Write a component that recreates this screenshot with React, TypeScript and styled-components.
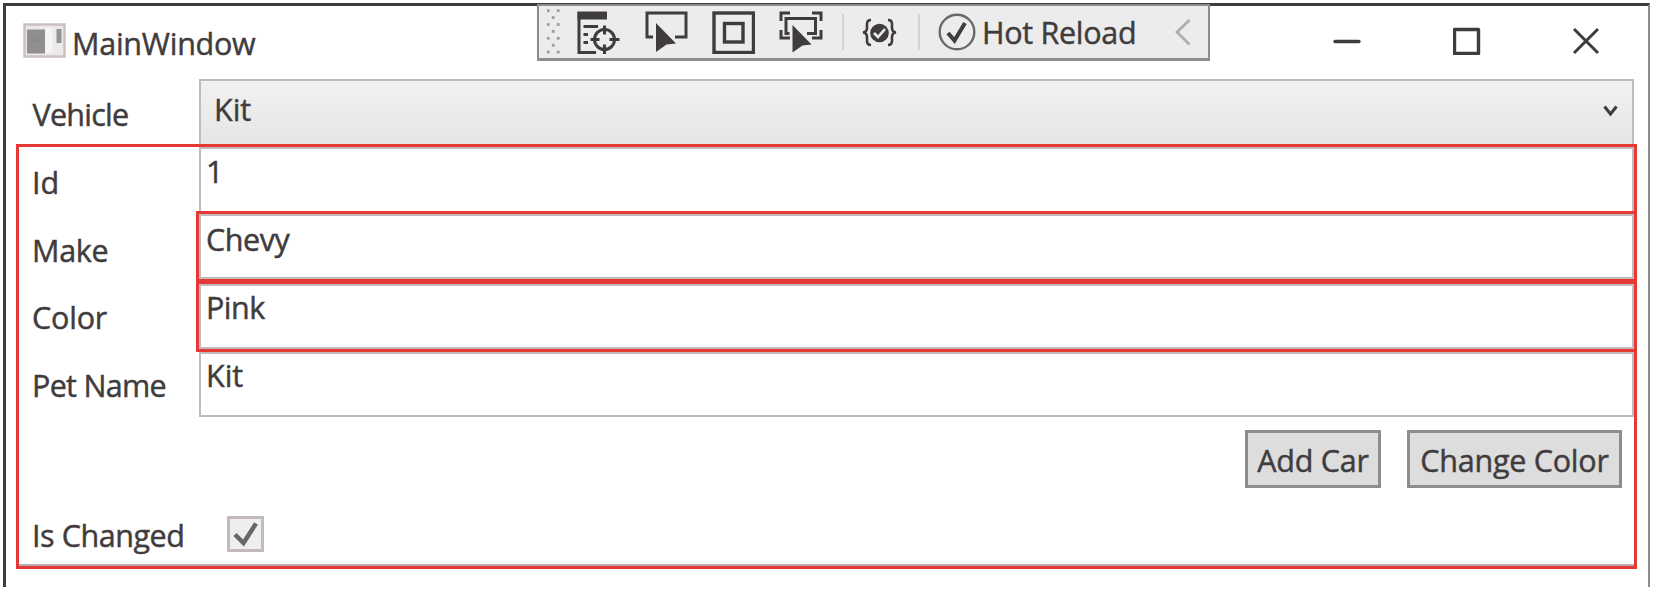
import React from "react";
import styled, { createGlobalStyle } from "styled-components";

const INK = "#403c3d";
const RED = "#e53935";
const LINE = "#c4b9bb";
const STEEL = "#908b8d";

const GlobalStyle = createGlobalStyle`
  *, *::before, *::after { box-sizing: border-box; }
  body {
    margin: 0;
    background: #fff;
    color: ${INK};
    font-family: "Open Sans", "Noto Sans", sans-serif;
    font-size: 30.5px;
    line-height: 40px;
    overflow: hidden;
  }
`;

const Screen = styled.div`
  height: 591px;
  padding: 3px 3px 4px 3px;
`;

const Window = styled.main`
  position: relative;
  height: 584px;
  border: solid ${INK};
  border-width: 3px 2px 0 3px;
  border-right-color: ${STEEL};
`;

const Text = styled.span<{ $track?: number }>`
  display: block;
  white-space: nowrap;
  letter-spacing: ${(p) => p.$track ?? 0}px;
  -webkit-text-stroke: 0.45px ${INK};
`;

const TitleBar = styled.header`
  display: flex;
  align-items: flex-start;
  height: 73px;
  padding: 16px 0 0 16px;
`;

const Title = styled.h1`
  margin: 1px auto 0 6px;
  font: inherit;
`;

const Caption = styled.div`
  display: flex;
  gap: 91.5px;
  padding: 5px 48px 0 0;
`;

const Icon = styled.svg<{ $ml?: number; $mt?: number }>`
  display: block;
  flex: none;
  margin-left: ${(p) => p.$ml ?? 0}px;
  margin-top: ${(p) => p.$mt ?? 0}px;
`;

const DebugBar = styled.div`
  position: absolute;
  left: 531px;
  top: -2px;
  width: 673px;
  height: 57px;
  display: flex;
  align-items: center;
  padding: 0 0 0 8px;
  border: 2px solid ${STEEL};
  border-bottom-width: 3px;
  background: #ececec;
`;

const Separator = styled.i<{ $ml: number }>`
  width: 2px;
  height: 36px;
  margin-left: ${(p) => p.$ml}px;
  background: #d4d2d3;
`;

const HotReload = styled.div`
  margin: 0 0 0 6px;
  width: 157px;
`;

const VehicleRow = styled.div`
  display: flex;
  height: 65px;
  padding: 0 14px 0 26.5px;
`;

const VehicleLabel = styled.label`
  width: 166.5px;
  padding-top: 15px;
`;

const Combo = styled.div`
  display: flex;
  flex: 1;
  justify-content: space-between;
  padding: 8px 14px 0 13px;
  border: 2px solid ${LINE};
  border-bottom: 0;
  background: linear-gradient(#f1f1f1, #ececec 45%, #e6e6e6);
`;

const Group = styled.section`
  width: 1621px;
  height: 425px;
  margin-left: 10px;
  border: 3px solid ${RED};
  box-shadow: inset 0 -2px 0 #b5adaf;
`;

const Row = styled.div<{ $h: number; $gap: number }>`
  display: flex;
  height: ${(p) => p.$h}px;
  margin-bottom: ${(p) => p.$gap}px;
`;

const Label = styled.label<{ $top: number }>`
  width: 180px;
  padding: ${(p) => p.$top}px 0 0 13px;
`;

const TextBox = styled.div<{ $invalid?: boolean; $top: number; $open?: boolean }>`
  flex: 1;
  padding: ${(p) => p.$top}px 0 0 5px;
  border: 2px solid ${LINE};
  border-bottom-width: ${(p) => (p.$open ? 0 : 2)}px;
  box-shadow: ${(p) => (p.$invalid ? `0 0 0 3px ${RED}` : "none")};
`;

const Actions = styled.div`
  display: flex;
  justify-content: flex-end;
  gap: 26px;
  padding: 13px 12px 0 0;
`;

const Button = styled.button<{ $w: number }>`
  display: flex;
  justify-content: center;
  width: ${(p) => p.$w}px;
  height: 58px;
  padding: 7px 0 0;
  border: 3px solid ${STEEL};
  background: #dddddd;
  color: inherit;
  font: inherit;
`;

const ChangedRow = styled.div`
  display: flex;
  padding-top: 26px;
`;

const ChangedLabel = styled.label`
  width: 208px;
  padding: 1px 0 0 13px;
`;

const CheckBox = styled.div`
  width: 37px;
  height: 36px;
  margin-top: 2px;
  border: 3px solid ${LINE};
  background: #efeeee;
`;

const fields = [
  { label: "Id", value: "1", h: 64, gap: 3, labelTop: 15, top: 2, invalid: false, labelTrack: 0, track: 0 },
  { label: "Make", value: "Chevy", h: 65, gap: 5, labelTop: 15.5, top: 3, invalid: true, labelTrack: -0.3, track: -0.45 },
  { label: "Color", value: "Pink", h: 65, gap: 3, labelTop: 13, top: 1, invalid: true, labelTrack: -0.2, track: -0.5 },
  { label: "Pet Name", value: "Kit", h: 65, gap: 0, labelTop: 13, top: 1, invalid: false, labelTrack: -0.7, track: 0 },
];

const gripDots = Array.from({ length: 7 }, (_, r) =>
  (r % 2 ? [6] : [1, 11]).map((x) => ({ x, y: 1.5 + r * 6.9 }))
).flat();

const POINTER = "M0 0 L20 20.5 L10.5 21.5 L0 29 Z";

export default function App() {
  return (
    <>
      <GlobalStyle />
      <Screen>
        <Window>
          <TitleBar>
            <Icon $ml={1} width="43" height="36" viewBox="0 0 43 36">
              <rect x="1.5" y="2.5" width="40" height="32" fill="#ebe9e9" stroke="#cbbfc1" strokeWidth="2.5" />
              <rect x="4" y="7.5" width="18" height="24" fill="#918e8f" />
              <path d="M6 21 L11 18 H19" stroke="#6f6b6c" strokeDasharray="1 2" fill="none" />
              <rect x="22.5" y="6" width="7" height="25" fill="#f5f4f4" />
              <rect x="33.5" y="7" width="5" height="14" fill="#969293" />
            </Icon>
            <Title><Text $track={-0.25}>MainWindow</Text></Title>
            <Caption>
              <Icon width="28" height="28" viewBox="0 0 28 28" stroke={INK} strokeWidth="3.4" strokeLinecap="round">
                <path d="M2 14.5 H26" />
              </Icon>
              <Icon width="28" height="28" viewBox="0 0 28 28" stroke={INK} strokeWidth="3.4" strokeLinejoin="round" fill="none">
                <rect x="1.5" y="2.5" width="24" height="24" />
              </Icon>
              <Icon width="28" height="28" viewBox="0 0 28 28" stroke={INK} strokeWidth="3">
                <path d="M2 2 L26 26 M26 2 L2 26" />
              </Icon>
            </Caption>
            <DebugBar>
              <Icon width="13" height="46" viewBox="0 0 13 46" fill="#a09b9d">
                {gripDots.map((d) => (
                  <rect key={`${d.x}-${d.y}`} x={d.x - 1.2} y={d.y - 1.2} width="2.8" height="2.8" />
                ))}
              </Icon>
              <Icon $ml={17} width="43" height="43" viewBox="0 0 43 43" fill="none" stroke={INK} strokeWidth="3">
                <path d="M2 1 V41.5 H19" />
                <path d="M0.5 4.5 H30" strokeWidth="8" />
                <path d="M6.5 15.5 H21 M6.5 23.5 H11 M6.5 31.5 H11" />
                <circle cx="27.5" cy="28.5" r="10" />
                <path d="M27.5 14.5 V23.5 M27.5 33.5 V43 M13.5 28.5 H22.5 M32.5 28.5 H42.5" />
              </Icon>
              <Icon $ml={25} width="43" height="43" viewBox="0 0 43 43" fill="none" stroke={INK} strokeWidth="3">
                <path d="M8 26 H2 V2 H41 V26 H30" />
                <path d={POINTER} transform="translate(11 12)" fill={INK} stroke="none" />
              </Icon>
              <Icon $ml={24} width="43" height="43" viewBox="0 0 43 43" fill="none" stroke={INK} strokeWidth="3.4">
                <rect x="2" y="2" width="39.5" height="39.5" />
                <rect x="12.5" y="12.5" width="18.5" height="18.5" />
              </Icon>
              <Icon $ml={24} width="44" height="43" viewBox="0 0 44 43" fill="none" stroke={INK} strokeWidth="3">
                <path d="M2 10 V2 H11 M33 2 H42 V10 M42 19 V27 H33 M11 27 H2 V19" />
                <path d="M10.5 22.5 H7 V7.5 H36.5 V22.5 H28" />
                <path d={POINTER} transform="translate(13.5 14) scale(.95)" fill={INK} stroke="#ececec" strokeWidth="2" paintOrder="stroke" />
              </Icon>
              <Separator $ml={19} />
              <Icon $ml={18} width="35" height="29" viewBox="0 0 35 29" fill="none" stroke={INK} strokeWidth="2.6">
                <path d="M9 2 Q5 2 5 6 V10 Q5 14 1 14.5 Q5 15 5 19 V23 Q5 27 9 27" />
                <path d="M26 2 Q30 2 30 6 V10 Q30 14 34 14.5 Q30 15 30 19 V23 Q30 27 26 27" />
                <circle cx="17.5" cy="15" r="9.3" fill={INK} stroke="none" />
                <path d="M12 15 L16 19 L23 11" stroke="#ececec" />
              </Icon>
              <Separator $ml={21} />
              <Icon $ml={18} width="38" height="38" viewBox="0 0 38 38" fill="none" stroke={INK}>
                <circle cx="19" cy="19" r="17.3" stroke="#6c6869" strokeWidth="2.4" />
                <path d="M10 20 L16.5 27.5 L27 10" strokeWidth="4" />
              </Icon>
              <HotReload><Text $track={-0.3}>Hot Reload</Text></HotReload>
              <Icon $ml={35.5} width="16" height="28" viewBox="0 0 16 28" fill="none" stroke="#b5abad" strokeWidth="2.8">
                <path d="M14.5 2 L2 14 L14.5 26.5" />
              </Icon>
            </DebugBar>
          </TitleBar>

          <VehicleRow>
            <VehicleLabel><Text $track={-0.75}>Vehicle</Text></VehicleLabel>
            <Combo>
              <Text>Kit</Text>
              <Icon $mt={15.5} width="15" height="12" viewBox="0 0 15 12" fill="none" stroke={INK} strokeWidth="3">
                <path d="M1.5 1.5 L7.5 9 L13.5 1.5" />
              </Icon>
            </Combo>
          </VehicleRow>

          <Group>
            {fields.map((f) => (
              <Row key={f.label} $h={f.h} $gap={f.gap}>
                <Label $top={f.labelTop}><Text $track={f.labelTrack}>{f.label}</Text></Label>
                <TextBox $top={f.top} $invalid={f.invalid} $open={f.label === "Id"}>
                  <Text $track={f.track}>{f.value}</Text>
                </TextBox>
              </Row>
            ))}
            <Actions>
              <Button $w={136}><Text $track={-0.25}>Add Car</Text></Button>
              <Button $w={215}><Text $track={-0.25}>Change Color</Text></Button>
            </Actions>
            <ChangedRow>
              <ChangedLabel><Text $track={-0.45}>Is Changed</Text></ChangedLabel>
              <CheckBox>
                <Icon width="31" height="30" viewBox="0 0 31 30" fill="none" stroke="#6a6667" strokeWidth="4.5">
                  <path d="M5 15.5 L13.5 24 L26 4.5" />
                </Icon>
              </CheckBox>
            </ChangedRow>
          </Group>
        </Window>
      </Screen>
    </>
  );
}
